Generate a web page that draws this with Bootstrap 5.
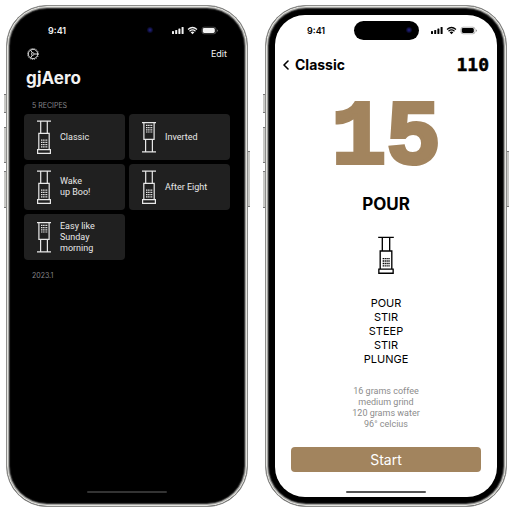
<!DOCTYPE html>
<html lang="en">
<head>
<meta charset="utf-8">
<meta name="viewport" content="width=device-width, initial-scale=1">
<title>gjAero</title>
<link href="https://cdn.jsdelivr.net/npm/bootstrap@5.3.0/dist/css/bootstrap.min.css" rel="stylesheet">
<style>
body{font-family:Inter,"Liberation Sans",sans-serif;background:#fff;font-size:9px;line-height:11px}
.stage{padding:5px 5px 5px 6px;gap:17px;min-height:100vh}
.phone{flex:1 1 0;min-width:0;border:1px solid #8d8d8b;border-radius:41px;background:#000;box-shadow:inset 0 0 0 1px #e4e4e0,inset 0 0 0 2px #a3a3a0,inset 0 0 1px 3px #444}
.side-key{position:absolute;width:2px;background:#c9c9c6;border-top:1px solid #777;border-bottom:1px solid #777;left:-3px}
.key-a{top:88px;height:19px}.key-b{top:121px;height:36px}.key-c{top:165px;height:37px}
.key-d{top:145px;height:56px;left:auto;right:-3px}
.screen{border-radius:30px;margin:9px}
.dark-screen{color:#f2f2f2}
.light-screen{background:#fff;color:#000}
.status{height:30px;padding:0 20px 0 32px;font-size:9px;font-weight:600}
.island{position:absolute;top:15px;left:50%;width:65px;height:19px;margin-left:-32px;border-radius:10px;background:#000}
.island::after{content:"";position:absolute;right:7px;top:6px;width:6px;height:6px;border-radius:50%;background:radial-gradient(#25258c,#0b0b2c 60%,#000)}
.tools{padding:0 11px 0 11px;height:18px}
.plain{background:none;border:0;padding:0;color:inherit;line-height:12px}
.edit{font-size:9px}
.title{font-size:17px;line-height:20px;font-weight:700;margin:5px 0 0 10px}
.note{font-size:7px;line-height:8px;color:#85858a;padding-left:16px}
.recipes{display:grid;grid-template-columns:1fr 1fr;gap:4px;margin:4px 8px 12px}
.tally{padding-top:14px}
.recipe{background:#202020;border-radius:4px;height:46px;padding-left:13px;gap:9px;color:#e8e8e8;text-decoration:none;font-family:Roboto,Inter,sans-serif}
.home-bar{width:80px;height:2px;border-radius:1px;background:#333}
.light-screen .home-bar{background:#555}
.topbar{padding:3px 8px 0;height:36px}
.back{color:#000;font-size:14px;line-height:20px;font-weight:700;gap:6px;text-decoration:none}
.mono{font-family:"DejaVu Sans Mono","Liberation Mono",monospace;font-weight:700}
.total{font-size:18px;line-height:20px;-webkit-text-stroke:.5px #000}
.count{font-family:"Liberation Mono","DejaVu Sans Mono",monospace;font-weight:700;font-size:91px;line-height:90px;color:#a2845e;-webkit-text-stroke:4px #a2845e;margin-top:13px}
.phase{font-size:17px;line-height:20px;font-weight:700;margin:10px 0 22px}
.steps{font-size:11px;line-height:14px;margin:22px 0 0}
.facts{font-family:Roboto,Inter,sans-serif;font-size:9px;line-height:11px;color:#8c8c8c;margin:20px 0 0}
.start{background:#a2845e;color:#fff;font-size:14px;line-height:25px;padding:0;border:0;border-radius:4px;margin:0 16px 19px}
.start:hover{background:#94764f;color:#fff}
</style>
<script src="https://cdn.jsdelivr.net/npm/bootstrap@5.3.0/dist/js/bootstrap.bundle.min.js"></script>
</head>
<body>
<svg width="0" height="0" class="position-absolute" aria-hidden="true">
<defs>
<symbol id="press" viewBox="0 0 14 34">
<path d="M0 1.2H14M3.7 1.5V13.2M10.3 1.5V13.2M1.8 29.5V13.4H12.2V29.5M.6 29.6H13.4V33.3H.6Z" fill="none" stroke="currentColor" stroke-width="1.2"/>
<path d="M4 20.2H10.4M4 22.4H10.4M4 24.6H10.4M4 26.8H10.4" stroke="currentColor" stroke-width="1.2" stroke-dasharray="1.2 .5"/>
</symbol>
<symbol id="flipped" viewBox="0 0 14 34">
<path d="M0 2.7H14M1.9 3V19.4H12.1V3M3.6 19.5V31.6M10.4 19.5V31.6M0 31.8H14" fill="none" stroke="currentColor" stroke-width="1.2"/>
<path d="M4 5.4H10.4M4 7.6H10.4M4 9.8H10.4M4 12H10.4" stroke="currentColor" stroke-width="1.2" stroke-dasharray="1.2 .5"/>
</symbol>
<symbol id="signals" viewBox="0 0 46 9">
<g fill="currentColor"><rect x="0" y="5" width="2" height="3" rx=".6"/><rect x="3.2" y="4" width="2" height="4" rx=".6"/><rect x="6.4" y="2.5" width="2" height="5.5" rx=".6"/><rect x="9.6" y="1" width="2" height="7" rx=".6"/>
<rect x="30.8" y="2" width="12" height="5" rx="1.4"/><path d="M45 3.4c1 .3 1 2 0 2.3z" opacity=".6"/><path d="M18.6 6.3Q20.5 4.8 22.4 6.3L20.5 8.3Z"/></g>
<g fill="none" stroke="currentColor"><path d="M16 3.5Q20.5-.5 25 3.5M17.5 5.2Q20.5 2.6 23.5 5.2" stroke-width="1.2"/><rect x="30" y="1.2" width="14" height="6.6" rx="2.1" stroke-width=".6" opacity=".5"/></g>
</symbol>
</defs>
</svg>
<main class="stage d-flex">
<section class="phone position-relative d-flex flex-column" aria-label="Recipes">
<i class="side-key key-a"></i><i class="side-key key-b"></i><i class="side-key key-c"></i><i class="side-key key-d"></i>
<div class="island"></div>
<div class="screen dark-screen flex-grow-1 d-flex flex-column">
<div class="status d-flex align-items-center justify-content-between"><span>9:41</span><svg width="46" height="9"><use href="#signals"/></svg></div>
<div class="tools d-flex align-items-center justify-content-between">
<button class="plain d-flex" type="button" aria-label="Settings"><svg width="12" height="12" viewBox="0 0 12 12" fill="none" stroke="currentColor"><circle cx="6" cy="6" r="4.7" stroke-width=".9"/><circle cx="6" cy="6" r="5.5" stroke-width=".8" stroke-dasharray="1 1.16"/><path d="M7.3 6H10.6M5.3 4.9L3.6 2M5.3 7.1L3.6 10" stroke-width=".9"/><circle cx="5.8" cy="6" r="1.3" stroke-width=".8"/></svg></button>
<button class="plain edit" type="button">Edit</button>
</div>
<h1 class="title">gjAero</h1>
<div class="note tally">5 RECIPES</div>
<div class="recipes">
<a href="#classic" class="recipe d-flex align-items-center"><svg width="14" height="34"><use href="#press"/></svg><span>Classic</span></a>
<a href="#inverted" class="recipe d-flex align-items-center"><svg width="14" height="34"><use href="#flipped"/></svg><span>Inverted</span></a>
<a href="#wake" class="recipe d-flex align-items-center"><svg width="14" height="34"><use href="#press"/></svg><span>Wake<br>up Boo!</span></a>
<a href="#eight" class="recipe d-flex align-items-center"><svg width="14" height="34"><use href="#press"/></svg><span>After Eight</span></a>
<a href="#sunday" class="recipe d-flex align-items-center"><svg width="14" height="34"><use href="#flipped"/></svg><span>Easy like<br>Sunday<br>morning</span></a>
</div>
<div class="note">2023.1</div>
<div class="home-bar mx-auto mt-auto mb-1"></div>
</div>
</section>
<section class="phone position-relative d-flex flex-column" aria-label="Classic recipe">
<i class="side-key key-a"></i><i class="side-key key-b"></i><i class="side-key key-c"></i><i class="side-key key-d"></i>
<div class="island"></div>
<div class="screen light-screen flex-grow-1 d-flex flex-column" id="classic">
<div class="status d-flex align-items-center justify-content-between"><span>9:41</span><svg width="46" height="9"><use href="#signals"/></svg></div>
<div class="topbar d-flex align-items-center justify-content-between">
<a href="#" class="back d-flex align-items-center"><svg width="6" height="10" viewBox="0 0 6 10" fill="none" stroke="currentColor" stroke-width="1.6" stroke-linecap="round" stroke-linejoin="round"><path d="M5 1L1 5L5 9"/></svg><span>Classic</span></a>
<span class="total mono">110</span>
</div>
<div class="count text-center">15</div>
<h2 class="phase text-center">POUR</h2>
<svg class="mx-auto" width="16" height="38"><use href="#press"/></svg>
<ul class="steps list-unstyled text-center"><li>POUR</li><li>STIR</li><li>STEEP</li><li>STIR</li><li>PLUNGE</li></ul>
<ul class="facts list-unstyled text-center"><li>16 grams coffee</li><li>medium grind</li><li>120 grams water</li><li>96° celcius</li></ul>
<button class="btn start mt-auto" type="button">Start</button>
<div class="home-bar mx-auto mb-1"></div>
</div>
</section>
</main>
</body>
</html>
